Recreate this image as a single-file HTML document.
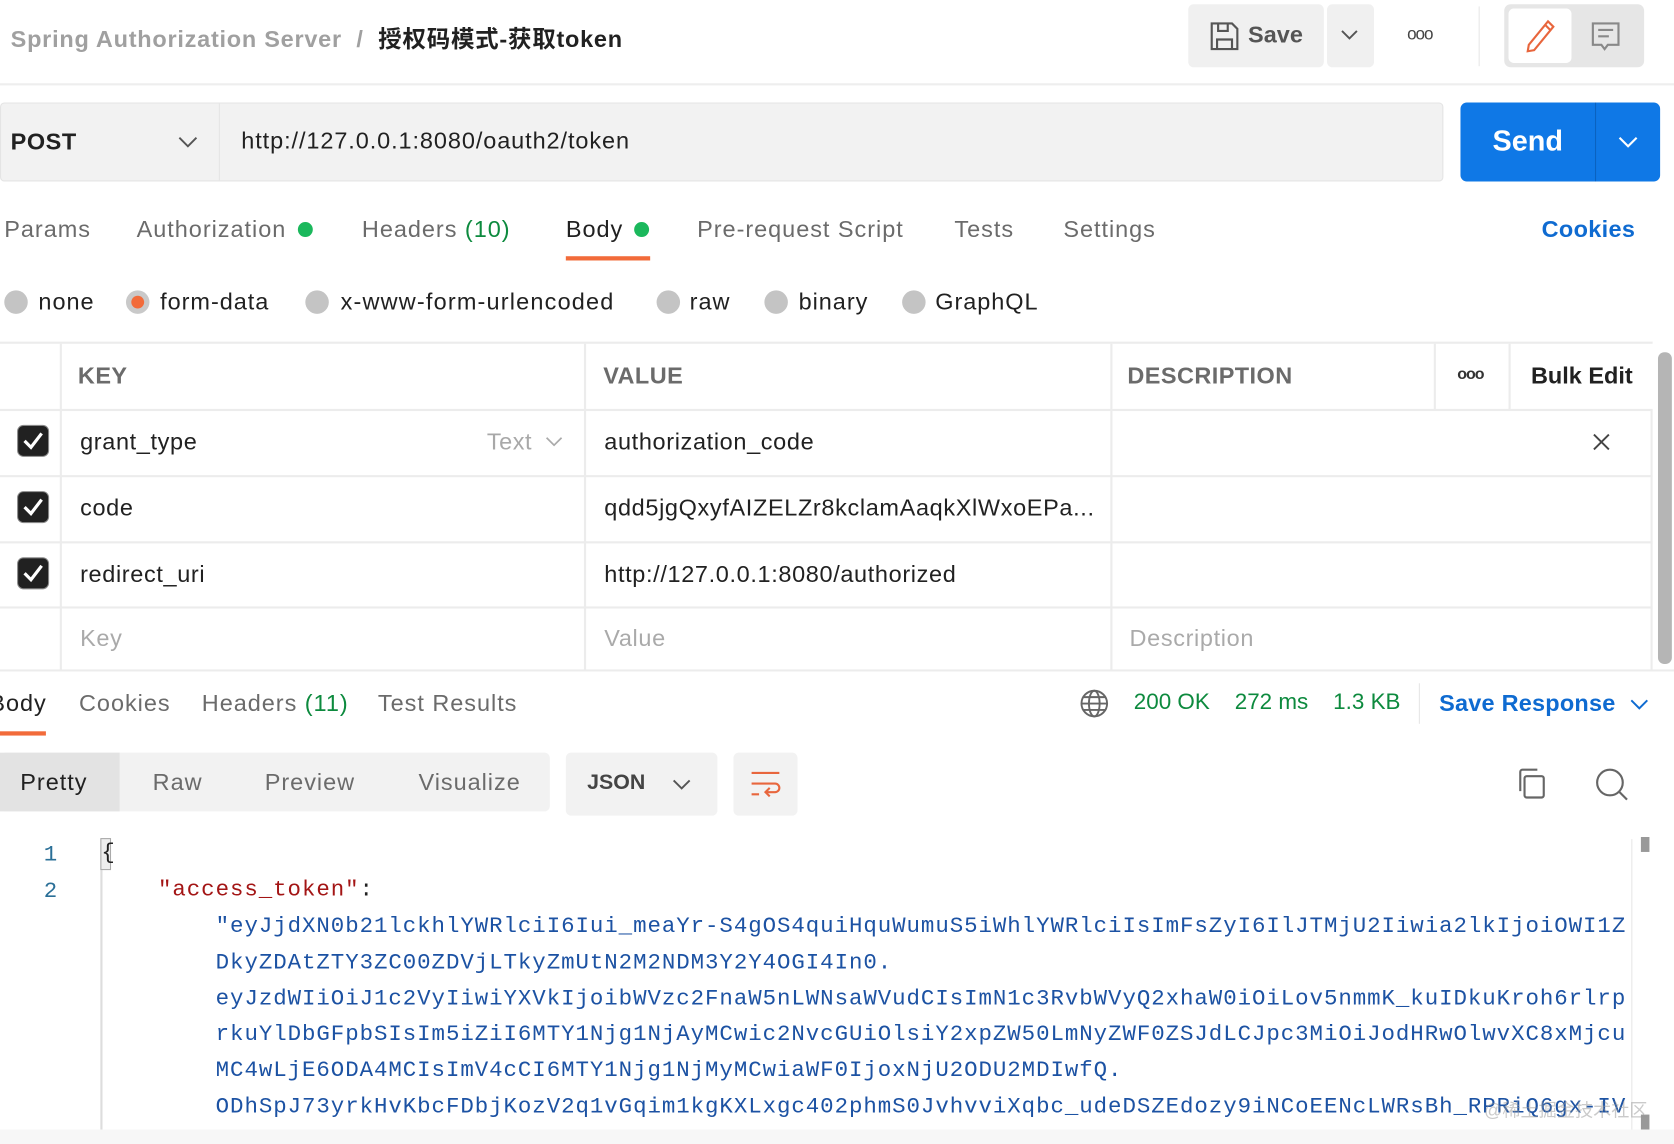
<!DOCTYPE html>
<html><head><meta charset="utf-8"><style>
html,body{margin:0;padding:0;background:#fff;overflow:hidden;width:1674px;height:1144px}
#w{position:absolute;left:0;top:0;width:1568px;height:1072px;transform:scale(1.06760);transform-origin:0 0;font-family:"Liberation Sans","Noto Sans CJK SC",sans-serif;color:#212121}
.a{position:absolute;white-space:nowrap}
.t{font-size:22px;letter-spacing:0.9px;color:#6b6b6b}
.hl{position:absolute;background:#e6e6e6}
.cb{position:absolute;left:16px;width:30px;height:30px;background:#212121;border-radius:6px;border:1px solid #888;box-sizing:border-box}
.cb svg{position:absolute;left:4px;top:5px}
.rad{position:absolute;width:22px;height:22px;border-radius:50%;background:#c4c4c4;top:272px}
.cell{font-size:22px;letter-spacing:0.6px;color:#212121}
.code{font-family:"Liberation Mono",monospace;font-size:21px;letter-spacing:0.88px;color:#1c52a3}
</style></head><body><div id="w">
<!-- header -->
<div class="a" style="left:10px;top:19px;font-size:22px;letter-spacing:0.7px;font-weight:bold;color:#a0a0a0">Spring Authorization Server&nbsp; /&nbsp; <span style="color:#212121">授权码模式-获取token</span></div>
<div class="a" style="left:1113px;top:4px;width:127px;height:59px;background:#f0f0f0;border-radius:5px"></div>
<svg class="a" style="left:1133px;top:20px" width="28" height="28" viewBox="0 0 28 28" fill="none" stroke="#555" stroke-width="2"><path d="M2 2h19l5 5v19H2z"/><path d="M8 2v7h9V2M7 26v-9h14v9"/></svg>
<div class="a" style="left:1169px;top:20px;font-size:22px;font-weight:bold;color:#555">Save</div>
<div class="a" style="left:1243px;top:4px;width:44px;height:59px;background:#f0f0f0;border-radius:5px"></div>
<svg class="a" style="left:1256px;top:28px" width="16" height="10"><path d="M1 1l7 7 7-7" fill="none" stroke="#555" stroke-width="1.8"/></svg>
<div class="a" style="left:1318px;top:24px;font-size:16px;color:#444;letter-spacing:-1px">ooo</div>
<div class="hl" style="left:1385px;top:6px;width:1px;height:56px"></div>
<div class="a" style="left:1409px;top:4px;width:131px;height:59px;background:#e6e6e6;border-radius:6px"></div>
<div class="a" style="left:1413px;top:8px;width:59px;height:51px;background:#fff;border-radius:5px"></div>
<svg class="a" style="left:1428px;top:18px" width="30" height="32" viewBox="0 0 30 32" fill="none" stroke="#e8663d" stroke-width="2"><path d="M22 2l5 5L9 29l-6 1 1-6z M19 5l5 5"/></svg>
<svg class="a" style="left:1490px;top:20px" width="28" height="30" viewBox="0 0 28 30" fill="none" stroke="#888" stroke-width="2"><path d="M2 2h24v20H16l-3 4-3-4H2z M7 8h14M7 14h10"/></svg>
<div class="hl" style="left:0;top:78px;width:1568px;height:2px;background:#eee"></div>
<!-- url row -->
<div class="a" style="left:0;top:96px;width:1352px;height:74px;background:#f2f2f2;border:1px solid #e4e4e4;border-radius:4px;box-sizing:border-box"></div>
<div class="hl" style="left:205px;top:97px;width:1px;height:72px"></div>
<div class="a" style="left:10px;top:120px;font-size:22px;font-weight:bold;letter-spacing:0.5px">POST</div>
<svg class="a" style="left:167px;top:128px" width="18" height="11"><path d="M1 1l8 8 8-8" fill="none" stroke="#555" stroke-width="1.8"/></svg>
<div class="a" style="left:226px;top:119px;font-size:22px;letter-spacing:0.85px">http://127.0.0.1:8080/oauth2/token</div>
<div class="a" style="left:1368px;top:96px;width:187px;height:74px;background:#0f78e6;border-radius:6px"></div>
<div class="a" style="left:1494px;top:96px;width:1px;height:74px;background:#0a62c0"></div>
<div class="a" style="left:1398px;top:117px;font-size:27px;font-weight:bold;color:#fff">Send</div>
<svg class="a" style="left:1516px;top:128px" width="18" height="11"><path d="M1 1l8 8 8-8" fill="none" stroke="#fff" stroke-width="2"/></svg>
<!-- tabs -->
<div class="a t" style="left:4px;top:202px">Params</div>
<div class="a t" style="left:128px;top:202px">Authorization</div>
<div class="a" style="left:279px;top:208px;width:14px;height:14px;border-radius:50%;background:#1bb85c"></div>
<div class="a t" style="left:339px;top:202px">Headers <span style="color:#0d8a3e">(10)</span></div>
<div class="a t" style="left:530px;top:202px;color:#212121">Body</div>
<div class="a" style="left:594px;top:208px;width:14px;height:14px;border-radius:50%;background:#1bb85c"></div>
<div class="a" style="left:530px;top:240px;width:79px;height:4px;background:#f26b3a"></div>
<div class="a t" style="left:653px;top:202px">Pre-request Script</div>
<div class="a t" style="left:894px;top:202px">Tests</div>
<div class="a t" style="left:996px;top:202px">Settings</div>
<div class="a" style="left:1444px;top:202px;font-size:22px;letter-spacing:0.3px;font-weight:bold;color:#0f6bd1">Cookies</div>
<!-- radios -->
<div class="rad" style="left:4px"></div><div class="a cell" style="left:36px;top:270px;letter-spacing:0.9px">none</div>
<div class="rad" style="left:118px;background:#c9c9c9"></div><div class="a" style="left:123px;top:277px;width:12px;height:12px;border-radius:50%;background:#f26b3a"></div>
<div class="a cell" style="left:150px;top:270px;letter-spacing:0.9px">form-data</div>
<div class="rad" style="left:286px"></div><div class="a cell" style="left:319px;top:270px;letter-spacing:1.1px">x-www-form-urlencoded</div>
<div class="rad" style="left:615px"></div><div class="a cell" style="left:646px;top:270px;letter-spacing:0.9px">raw</div>
<div class="rad" style="left:716px"></div><div class="a cell" style="left:748px;top:270px;letter-spacing:0.9px">binary</div>
<div class="rad" style="left:845px"></div><div class="a cell" style="left:876px;top:270px;letter-spacing:0.9px">GraphQL</div>
<!-- table -->
<div class="hl" style="left:0;top:320px;width:1548px;height:2px;background:#ececec"></div>
<div class="hl" style="left:0;top:383px;width:1548px;height:2px;background:#ececec"></div>
<div class="hl" style="left:0;top:445px;width:1548px;height:2px;background:#ececec"></div>
<div class="hl" style="left:0;top:507px;width:1548px;height:2px;background:#ececec"></div>
<div class="hl" style="left:0;top:568px;width:1548px;height:2px;background:#ececec"></div>
<div class="hl" style="left:0;top:627px;width:1568px;height:2px;background:#ececec"></div>
<div class="hl" style="left:56px;top:322px;width:2px;height:306px;background:#ececec"></div>
<div class="hl" style="left:547px;top:322px;width:2px;height:306px;background:#ececec"></div>
<div class="hl" style="left:1040px;top:322px;width:2px;height:306px;background:#ececec"></div>
<div class="hl" style="left:1343px;top:322px;width:2px;height:62px;background:#ececec"></div>
<div class="hl" style="left:1413px;top:322px;width:2px;height:62px;background:#ececec"></div>
<div class="hl" style="left:1546px;top:384px;width:2px;height:244px;background:#ececec"></div>
<div class="a" style="left:1553px;top:330px;width:13px;height:292px;background:#b5b5b5;border-radius:6px"></div>
<div class="a" style="left:73px;top:339px;font-size:22px;letter-spacing:0.4px;font-weight:bold;color:#6b6b6b">KEY</div>
<div class="a" style="left:565px;top:339px;font-size:22px;letter-spacing:0.4px;font-weight:bold;color:#6b6b6b">VALUE</div>
<div class="a" style="left:1056px;top:339px;font-size:22px;letter-spacing:0.4px;font-weight:bold;color:#6b6b6b">DESCRIPTION</div>
<div class="a" style="left:1365px;top:342px;font-size:15px;font-weight:bold;color:#333;letter-spacing:-1px">ooo</div>
<div class="a" style="left:1434px;top:339px;font-size:22px;font-weight:bold;color:#212121">Bulk Edit</div>
<div class="cb" style="top:398px"><svg width="20" height="18"><path d="M2 9l6 6L18 2" fill="none" stroke="#fff" stroke-width="3"/></svg></div>
<div class="cb" style="top:460px"><svg width="20" height="18"><path d="M2 9l6 6L18 2" fill="none" stroke="#fff" stroke-width="3"/></svg></div>
<div class="cb" style="top:522px"><svg width="20" height="18"><path d="M2 9l6 6L18 2" fill="none" stroke="#fff" stroke-width="3"/></svg></div>
<div class="a cell" style="left:75px;top:401px">grant_type</div>
<div class="a" style="left:456px;top:401px;font-size:22px;letter-spacing:0.5px;color:#a8a8a8">Text</div>
<svg class="a" style="left:511px;top:409px" width="16" height="10"><path d="M1 1l7 7 7-7" fill="none" stroke="#aaa" stroke-width="1.6"/></svg>
<div class="a cell" style="left:566px;top:401px">authorization_code</div>
<svg class="a" style="left:1492px;top:406px" width="16" height="16"><path d="M1 1l14 14M15 1L1 15" stroke="#444" stroke-width="1.8"/></svg>
<div class="a cell" style="left:75px;top:463px">code</div>
<div class="a cell" style="left:566px;top:463px">qdd5jgQxyfAIZELZr8kclamAaqkXlWxoEPa...</div>
<div class="a cell" style="left:75px;top:525px">redirect_uri</div>
<div class="a cell" style="left:566px;top:525px">http://127.0.0.1:8080/authorized</div>
<div class="a" style="left:75px;top:585px;font-size:22px;letter-spacing:0.6px;color:#aaa">Key</div>
<div class="a" style="left:566px;top:585px;font-size:22px;letter-spacing:0.6px;color:#aaa">Value</div>
<div class="a" style="left:1058px;top:585px;font-size:22px;letter-spacing:0.6px;color:#aaa">Description</div>
<!-- response tabs -->
<div class="a t" style="left:-10px;top:646px;color:#212121">Body</div>
<div class="a" style="left:0;top:685px;width:43px;height:4px;background:#f26b3a"></div>
<div class="a t" style="left:74px;top:646px">Cookies</div>
<div class="a t" style="left:189px;top:646px">Headers <span style="color:#0d8a3e">(11)</span></div>
<div class="a t" style="left:354px;top:646px">Test Results</div>
<svg class="a" style="left:1011px;top:645px" width="28" height="28" viewBox="0 0 28 28" fill="none" stroke="#666" stroke-width="1.8"><circle cx="14" cy="14" r="12"/><ellipse cx="14" cy="14" rx="5" ry="12"/><path d="M2 14h24M4 8h20M4 20h20"/></svg>
<div class="a" style="left:1062px;top:646px;font-size:21px;color:#0d8a3e">200 OK&nbsp;&nbsp;&nbsp; 272 ms&nbsp;&nbsp;&nbsp; 1.3 KB</div>
<div class="hl" style="left:1329px;top:640px;width:1px;height:38px"></div>
<div class="a" style="left:1348px;top:646px;font-size:22px;letter-spacing:0.2px;font-weight:bold;color:#0f6bd1">Save Response</div>
<svg class="a" style="left:1527px;top:655px" width="17" height="10"><path d="M1 1l7.5 7.5L16 1" fill="none" stroke="#0f6bd1" stroke-width="1.8"/></svg>
<!-- pretty bar -->
<div class="a" style="left:0;top:705px;width:515px;height:55px;background:#f2f2f2;border-radius:5px"></div>
<div class="a" style="left:0;top:705px;width:112px;height:55px;background:#e3e3e3"></div>
<div class="a" style="left:19px;top:720px;font-size:22px;letter-spacing:0.9px;color:#212121">Pretty</div>
<div class="a t" style="left:143px;top:720px">Raw</div>
<div class="a t" style="left:248px;top:720px">Preview</div>
<div class="a t" style="left:392px;top:720px">Visualize</div>
<div class="a" style="left:530px;top:705px;width:142px;height:59px;background:#f2f2f2;border-radius:5px"></div>
<div class="a" style="left:550px;top:722px;font-size:20px;font-weight:bold;color:#444">JSON</div>
<svg class="a" style="left:630px;top:730px" width="17" height="10"><path d="M1 1l7.5 7.5L16 1" fill="none" stroke="#555" stroke-width="1.8"/></svg>
<div class="a" style="left:687px;top:705px;width:60px;height:59px;background:#f2f2f2;border-radius:5px"></div>
<svg class="a" style="left:703px;top:722px" width="30" height="28" viewBox="0 0 30 28" fill="none" stroke="#e8663d" stroke-width="2"><path d="M1 2h26M1 12h22a4 4 0 010 8h-8M18 16l-4 4 4 4M1 22h7"/></svg>
<svg class="a" style="left:1420px;top:719px" width="30" height="30" viewBox="0 0 30 30" fill="none" stroke="#666" stroke-width="2"><rect x="8" y="8" width="18" height="20" rx="2"/><path d="M4 22V4a2 2 0 012-2h14"/></svg>
<svg class="a" style="left:1494px;top:719px" width="32" height="32" viewBox="0 0 32 32" fill="none" stroke="#666" stroke-width="2"><circle cx="14" cy="14" r="12"/><path d="M23 23l7 7"/></svg>
<!-- code -->
<div class="a" style="left:41px;top:785px;font-family:'Liberation Mono',monospace;font-size:21px;color:#2a6f97;line-height:34px">1<br>2</div>
<div class="a" style="left:94px;top:786px;width:2px;height:272px;background:#ddd"></div>
<div class="a" style="left:94px;top:785px;width:10px;height:30px;border:1px solid #aaa;background:#eee;box-sizing:border-box"></div>
<div class="a" style="left:95px;top:785px;font-family:'Liberation Mono',monospace;font-size:21px;line-height:30px;color:#212121">{</div>
<div class="a code" style="left:148px;top:818px;line-height:34px;color:#a31515">"access_token"<span style="color:#212121">:</span></div>
<div class="a code" style="left:202px;top:852px;line-height:33.8px">"eyJjdXN0b21lckhlYWRlciI6Iui_meaYr-S4gOS4quiHquWumuS5iWhlYWRlciIsImFsZyI6IlJTMjU2Iiwia2lkIjoiOWI1Z<br>DkyZDAtZTY3ZC00ZDVjLTkyZmUtN2M2NDM3Y2Y4OGI4In0.<br>eyJzdWIiOiJ1c2VyIiwiYXVkIjoibWVzc2FnaW5nLWNsaWVudCIsImN1c3RvbWVyQ2xhaW0iOiLov5nmmK_kuIDkuKroh6rlrp<br>rkuYlDbGFpbSIsIm5iZiI6MTY1Njg1NjAyMCwic2NvcGUiOlsiY2xpZW50LmNyZWF0ZSJdLCJpc3MiOiJodHRwOlwvXC8xMjcu<br>MC4wLjE6ODA4MCIsImV4cCI6MTY1Njg1NjMyMCwiaWF0IjoxNjU2ODU2MDIwfQ.<br>ODhSpJ73yrkHvKbcFDbjKozV2q1vGqim1kgKXLxgc402phmS0JvhvviXqbc_udeDSZEdozy9iNCoEENcLWRsBh_RPRiQ6gx-IV</div>
<div class="a" style="left:1528px;top:786px;width:1px;height:272px;background:#e6e6e6"></div>
<div class="a" style="left:1537px;top:784px;width:8px;height:14px;background:#999"></div>
<div class="a" style="left:1537px;top:1044px;width:8px;height:14px;background:#999"></div>
<div class="a" style="left:1390px;top:1026px;font-size:17px;color:rgba(150,150,150,0.5)">@稀土掘金技术社区</div>
<div class="a" style="left:0;top:1058px;width:1568px;height:14px;background:#f7f7f7"></div>
</div></body></html>
